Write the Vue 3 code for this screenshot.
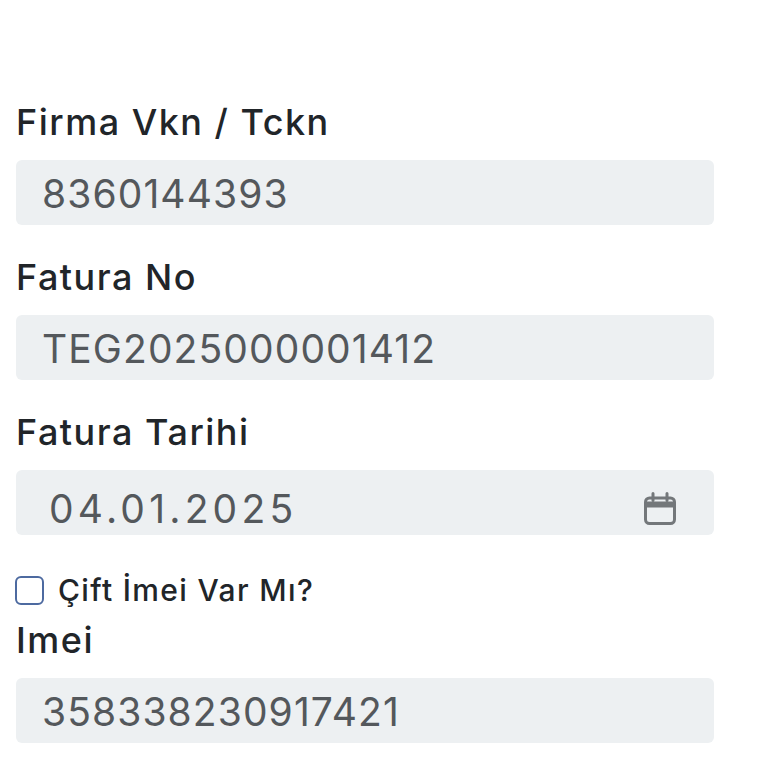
<script setup>
const top = [
  { label: 'Firma Vkn / Tckn', value: '8360144393' },
  { label: 'Fatura No', value: 'TEG2025000001412' },
]
</script>

<template>
  <main class="form">
    <div v-for="f in top" :key="f.label" class="group">
      <label class="label">{{ f.label }}</label>
      <input class="control" :value="f.value" readonly />
    </div>
    <div class="group">
      <label class="label">Fatura Tarihi</label>
      <div class="control date">
        <span class="date-text">04.01.2025</span>
        <svg class="cal" viewBox="0 0 34 34" width="34" height="34" fill="none" stroke="#73777a" stroke-width="3">
          <rect x="2.5" y="6" width="29" height="25.5" rx="4" />
          <path d="M2.5 12.5h29" stroke-width="6" />
          <path d="M10 1.5v7M24 1.5v7" stroke-linecap="round" />
        </svg>
      </div>
    </div>
    <div class="check">
      <span class="box"></span>
      <span class="check-label">Çift İmei Var Mı?</span>
    </div>
    <div class="group imei">
      <label class="label">Imei</label>
      <input class="control" value="358338230917421" readonly />
    </div>
  </main>
</template>

<style scoped>
.form {
  width: 698px;
  padding: 97px 0 0 16px;
  font-family: Inter, "Noto Sans", sans-serif;
}
.group {
  margin-bottom: 27px;
}
.imei {
  margin-bottom: 0;
}
.label {
  display: block;
  height: 51px;
  line-height: 51px;
  margin-bottom: 12px;
  font-size: 36px;
  font-weight: 500;
  letter-spacing: 1.5px;
  color: #212529;
}
.control {
  display: block;
  box-sizing: border-box;
  width: 100%;
  height: 65px;
  padding: 2px 26px 0;
  border: 0;
  border-radius: 6px;
  outline: 0;
  background: #edf0f2;
  color: #54585c;
  font-family: inherit;
  font-size: 39px;
  letter-spacing: 1.1px;
}
.date {
  display: flex;
  align-items: center;
  justify-content: space-between;
  padding: 12px 37px 0 33px;
}
.date-text {
  letter-spacing: 4.2px;
}
.check {
  display: flex;
  align-items: center;
  gap: 14px;
  height: 50px;
  margin-top: 30px;
}
.box {
  box-sizing: border-box;
  width: 29px;
  height: 29px;
  margin-left: -1px;
  border: 2px solid #4d6aa0;
  border-radius: 6px;
  background: #fff;
}
.check-label {
  font-size: 30px;
  font-weight: 500;
  letter-spacing: 1.35px;
  color: #212529;
}
</style>

<style>
body { background: #fff; }
</style>
